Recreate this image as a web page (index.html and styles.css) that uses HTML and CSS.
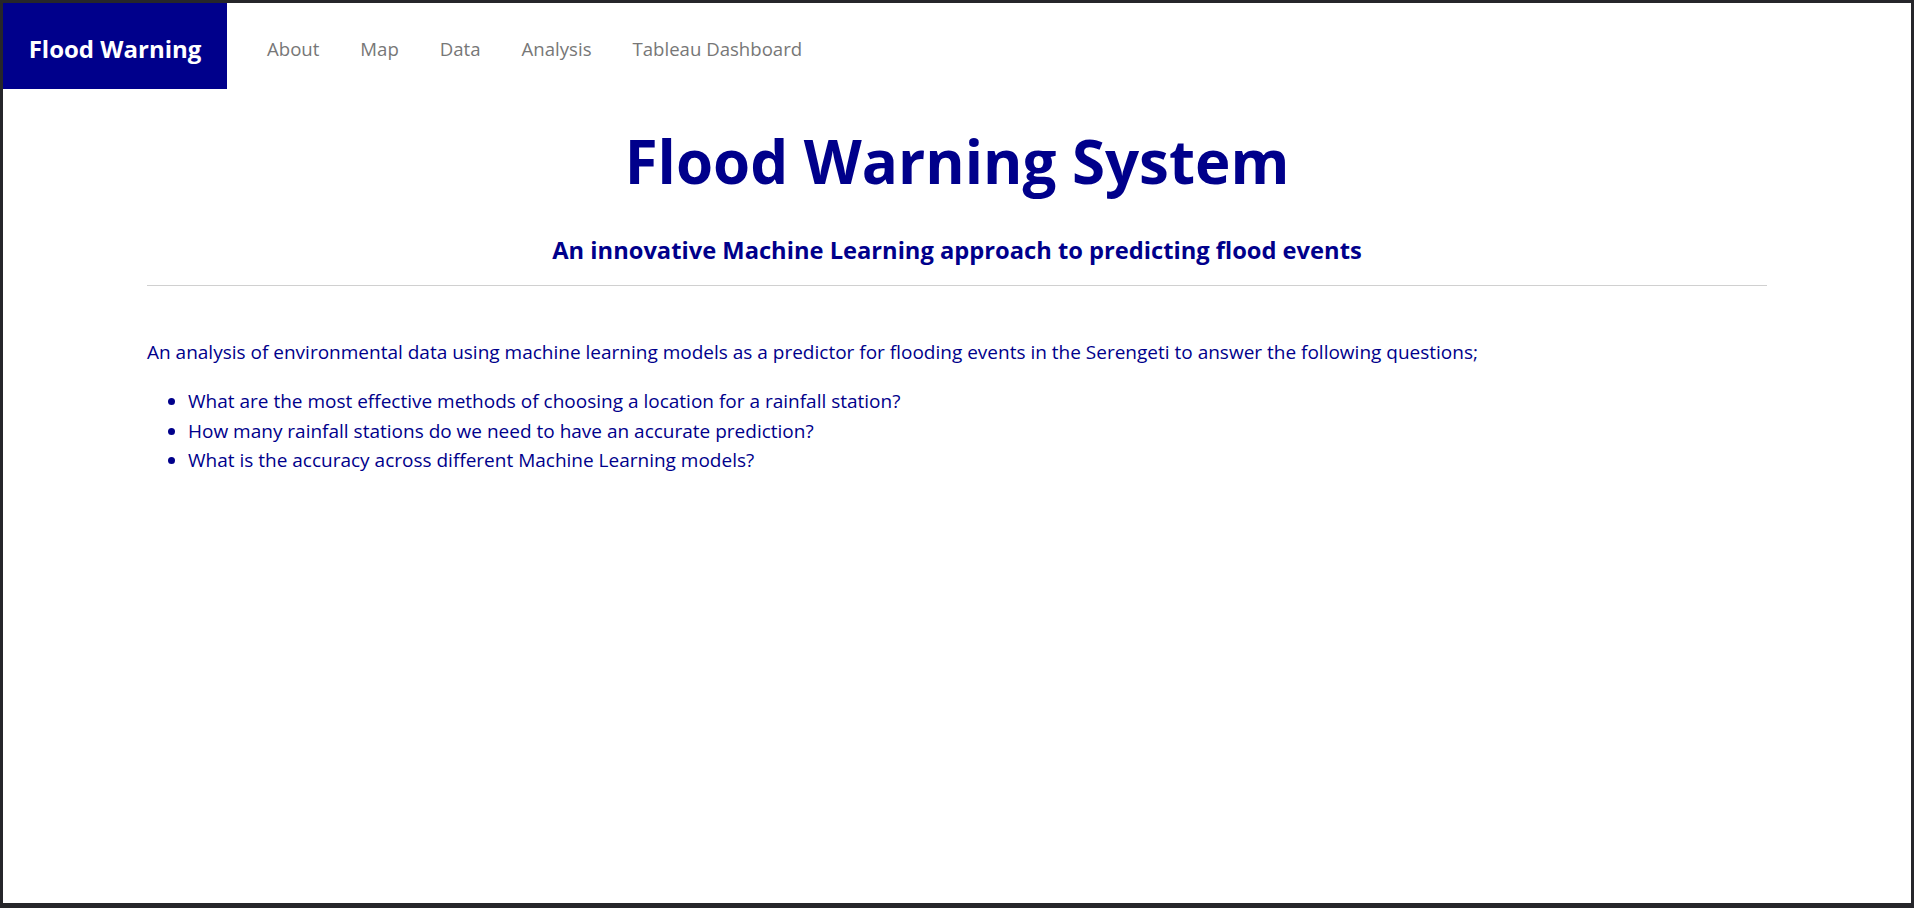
FILE: index.html
```html
<!DOCTYPE html>
<html lang="en">
<head>
<meta charset="utf-8">
<title>Flood Warning</title>
<link rel="stylesheet" href="styles.css">
</head>
<body>
<div class="page">
  <nav class="navbar">
    <a class="brand" href="#">Flood Warning</a>
    <ul class="nav-links">
      <li><a href="#">About</a></li>
      <li><a href="#">Map</a></li>
      <li><a href="#">Data</a></li>
      <li><a href="#">Analysis</a></li>
      <li><a href="#">Tableau Dashboard</a></li>
    </ul>
  </nav>
  <main class="content">
    <h1 class="title">Flood Warning System</h1>
    <h3 class="subtitle">An innovative Machine Learning approach to predicting flood events</h3>
    <hr class="divider">
    <p class="intro">An analysis of environmental data using machine learning models as a predictor for flooding events in the Serengeti to answer the following questions;</p>
    <ul class="questions">
      <li>What are the most effective methods of choosing a location for a rainfall station?</li>
      <li>How many rainfall stations do we need to have an accurate prediction?</li>
      <li>What is the accuracy across different Machine Learning models?</li>
    </ul>
  </main>
</div>
</body>
</html>
```
FILE: styles.css
```css
html, body {
  margin: 0;
  padding: 0;
  background: #26262a;
}
body {
  font-family: "Open Sans", "Noto Sans", sans-serif;
}
.page {
  margin: 3px 3px 5px 3px;
  height: 900px;
  background: #ffffff;
  overflow: hidden;
}
.navbar {
  display: flex;
  align-items: stretch;
  height: 86px;
}
.brand {
  display: flex;
  align-items: center;
  justify-content: center;
  box-sizing: border-box;
  width: 224px;
  padding-top: 4px;
  background: #00008b;
  color: #ffffff;
  font-weight: 700;
  font-size: 24px;
  text-decoration: none;
}
.nav-links {
  display: flex;
  align-items: center;
  list-style: none;
  margin: 0;
  padding: 4px 0 0 19.5px;
}
.nav-links a {
  display: block;
  padding: 0 20.5px;
  color: #777777;
  font-size: 18.6px;
  text-decoration: none;
}
.content {
  width: 1620px;
  margin: 0 auto;
  color: #00008b;
}
.title {
  margin: 36px 0 0;
  text-align: center;
  font-size: 60px;
  line-height: 72px;
  font-weight: 700;
}
.subtitle {
  margin: 38px 0 0;
  text-align: center;
  font-size: 23.7px;
  line-height: 30px;
  font-weight: 700;
}
.divider {
  margin: 19.5px 0 0;
  border: 0;
  border-top: 1px solid #d0d0d0;
  height: 0;
}
.intro {
  margin: 52px 0 0;
  font-size: 19px;
  line-height: 29px;
}
.questions {
  margin: 20.5px 0 0;
  padding-left: 41px;
  font-size: 19px;
  line-height: 29.6px;
}
```
